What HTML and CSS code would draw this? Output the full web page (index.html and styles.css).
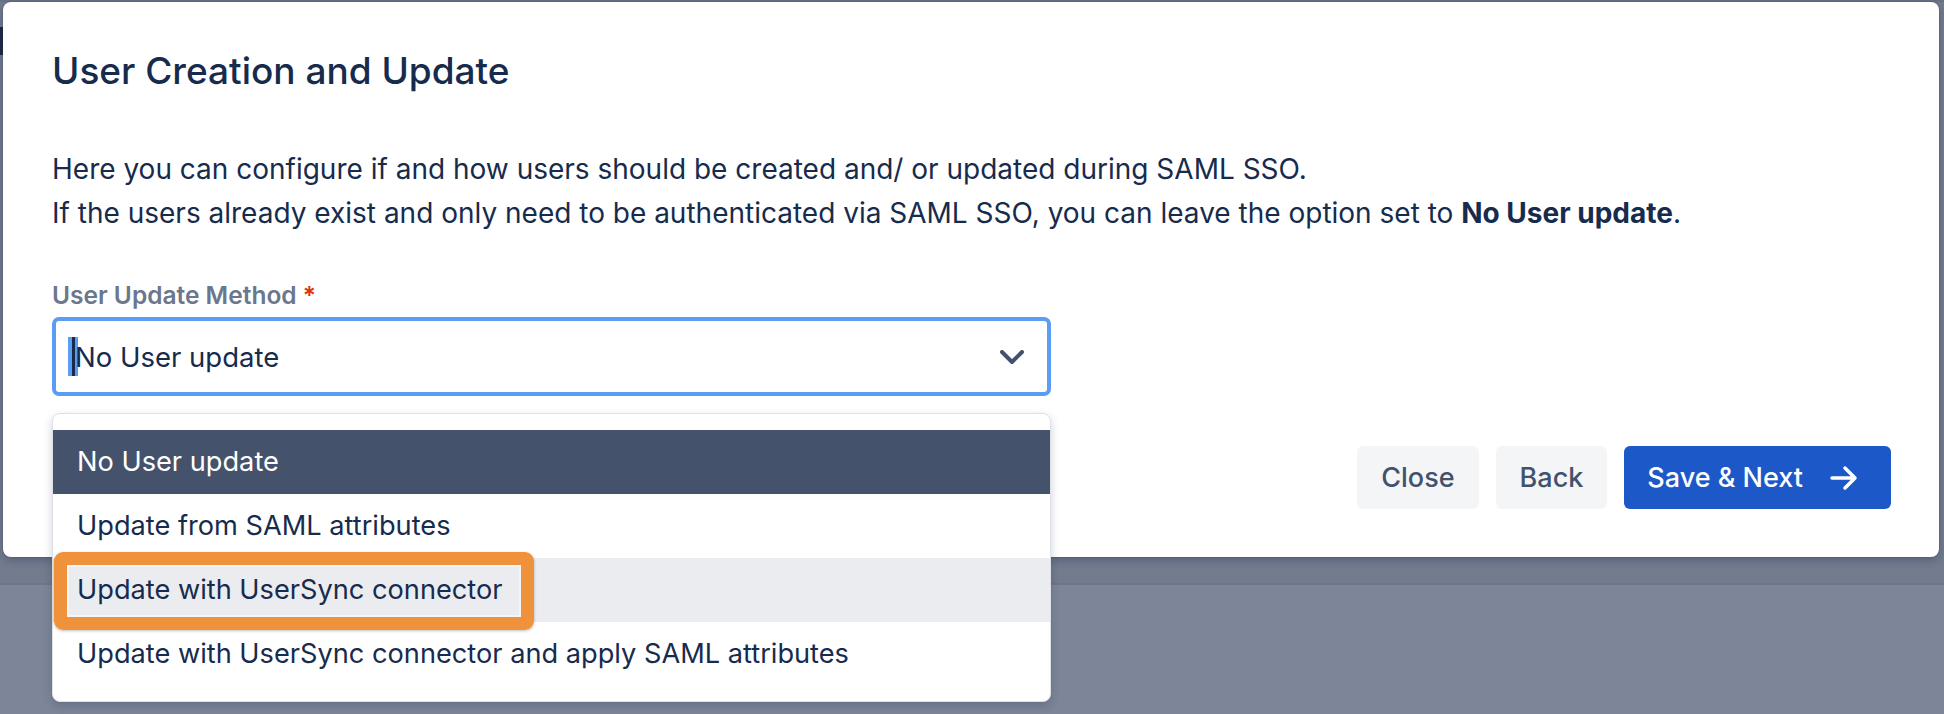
FILE: index.html
```html
<!DOCTYPE html>
<html lang="en">
<head>
	<meta charset="utf-8">
	<title>User Creation and Update</title>
	<link rel="stylesheet" href="styles.css">
</head>
<body>
	<div class="backdrop">
		<div class="page-top"></div>
		<div class="page-rule"></div>
		<div class="page-mark"></div>
	</div>

	<div class="modal" role="dialog">
		<h1 class="modal-title">User Creation and Update</h1>

		<p class="intro">
			Here you can configure if and how users should be created and/ or updated during SAML SSO.<br>
			If the users already exist and only need to be authenticated via SAML SSO, you can leave the option set to <strong>No User update</strong>.
		</p>

		<div class="field">
			<label class="field-label">User Update Method <span class="req">*</span></label>
			<div class="select-wrap">
				<div class="select">
					<span class="select-value"><span class="caret"></span>No User update</span>
					<svg class="chevron" width="24" height="14" viewBox="0 0 24 14">
						<path d="M2 2l10 10 10-10" fill="none" stroke="#42526e" stroke-width="4" stroke-linecap="round" stroke-linejoin="round"/>
					</svg>
				</div>

				<ul class="menu">
					<li class="option selected">No User update</li>
					<li class="option">Update from SAML attributes</li>
					<li class="option hovered">Update with UserSync connector<span class="callout"></span></li>
					<li class="option">Update with UserSync connector and apply SAML attributes</li>
				</ul>
			</div>
		</div>

		<div class="modal-footer">
			<button class="btn btn-subtle">Close</button>
			<button class="btn btn-subtle">Back</button>
			<button class="btn btn-primary">Save &amp; Next
				<svg width="30" height="26" viewBox="0 0 30 26">
					<path d="M3 13h23M16 3l10 10-10 10" fill="none" stroke="#ffffff" stroke-width="3.5" stroke-linecap="round" stroke-linejoin="round"/>
				</svg>
			</button>
		</div>
	</div>
</body>
</html>
```

FILE: styles.css
```css
html {
	height: 100%;
}

body {
	margin: 0;
	padding: 0;
	height: 100%;
	overflow: hidden;
	font-family: Inter, "Noto Sans", sans-serif;
	color: #172b4d;
	background: #7d8598;
}

/* page behind the dialog, greyed out */
.backdrop {
	height: 100%;
}

.page-top {
	height: 583px;
	background: #737b8e;
	border-top: 2px solid #697184;
	box-sizing: border-box;
}

.page-rule {
	height: 2px;
	background: #6e7689;
}

.page-mark {
	position: absolute;
	left: 0;
	top: 27px;
	width: 3px;
	height: 28px;
	background: #1f2a44;
}

.modal {
	position: absolute;
	left: 3px;
	top: 2px;
	width: 1936px;
	height: 555px;
	box-sizing: border-box;
	padding: 47px 48px 48px 49px;
	display: flex;
	flex-direction: column;
	background: #ffffff;
	border-radius: 8px;
	box-shadow: 0 0 0 1px rgba(9, 30, 66, 0.08), 0 3px 10px rgba(9, 30, 66, 0.3);
}

.modal-title {
	margin: 0;
	font-size: 37px;
	line-height: 44px;
	font-weight: 500;
	color: #172b4d;
}

.intro {
	margin: 54px 0 0;
	font-size: 28px;
	line-height: 44px;
}

.intro strong {
	font-weight: 700;
}

.field {
	margin-top: 44px;
	width: 999px;
}

.field-label {
	display: block;
	margin-bottom: 6px;
	font-size: 24.5px;
	line-height: 32px;
	font-weight: 600;
	color: #6b778c;
}

.req {
	color: #de350b;
}

.select-wrap {
	position: relative;
}

.select {
	height: 79px;
	box-sizing: border-box;
	border: 4px solid #5b9cf5;
	border-radius: 7px;
	padding: 0 23px 0 12px;
	display: flex;
	align-items: center;
	justify-content: space-between;
	font-size: 27.5px;
}

.caret {
	display: inline-block;
	width: 10px;
	height: 39px;
	margin-right: -3px;
	vertical-align: middle;
	background: linear-gradient(90deg, #5b9cf5 0 4px, #172b4d 4px 7px, #5b9cf5 7px);
}

.select-value {
	display: flex;
	align-items: center;
}

.menu {
	position: absolute;
	left: 0;
	right: 0;
	top: calc(100% + 17px);
	margin: 0;
	padding: 16px 0 15px;
	list-style: none;
	background: #ffffff;
	border: 1px solid #dfe1e6;
	border-radius: 8px;
	box-shadow: 0 4px 10px rgba(9, 30, 66, 0.2);
	z-index: 2;
}

.option {
	position: relative;
	height: 64px;
	line-height: 64px;
	padding: 0 24px;
	font-size: 27.2px;
	color: #172b4d;
}

.option.selected {
	background: #45526c;
	color: #ffffff;
}

.option.hovered {
	background: #ebecf0;
}

/* orange highlight drawn over the screenshot */
.callout {
	position: absolute;
	left: 1px;
	top: -6px;
	width: 480px;
	height: 78px;
	box-sizing: border-box;
	border: 13px solid #f0923b;
	border-radius: 9px;
	box-shadow: inset 0 0 0 2px #f4f5f7, 0 1px 3px rgba(0, 0, 0, 0.25);
}

.modal-footer {
	margin-top: auto;
	display: flex;
	justify-content: flex-end;
	gap: 17px;
}

.btn {
	height: 63px;
	padding: 0 24px;
	border: 0;
	border-radius: 6px;
	font-family: inherit;
	font-size: 27px;
	font-weight: 500;
	display: flex;
	align-items: center;
}

.btn-subtle {
	background: #f4f5f7;
	color: #42526e;
}

.btn-primary {
	background: #1c58c8;
	color: #ffffff;
	padding: 0 32px 0 23px;
	gap: 26px;
}
```
